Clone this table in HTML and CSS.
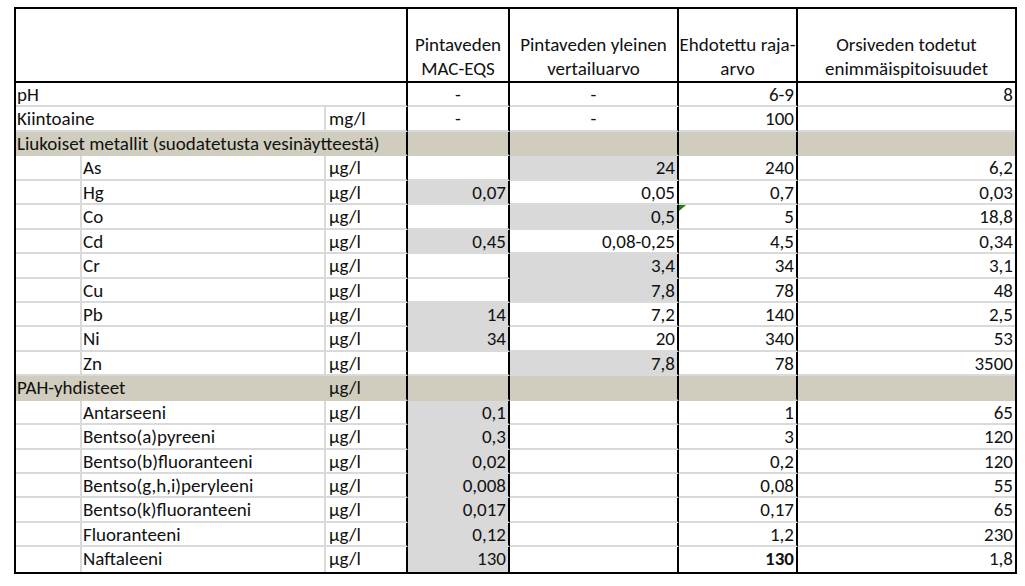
FILE: index.html
```html
<!DOCTYPE html>
<html lang="fi">
<head>
<meta charset="utf-8">
<title>Raja-arvot</title>
<link rel="stylesheet" href="styles.css">
</head>
<body>
<div class="sheet">
  <div class="c hd s3 bl"></div>
  <div class="c hd bl">Pintaveden<br>MAC-EQS</div>
  <div class="c hd bl">Pintaveden yleinen<br>vertailuarvo</div>
  <div class="c hd bl">Ehdotettu raja-<br>arvo</div>
  <div class="c hd">Orsiveden todetut<br>enimmäispitoisuudet</div>

  <div class="c s3 bl lead">pH</div>
  <div class="c ctr bl">-</div>
  <div class="c ctr bl">-</div>
  <div class="c r bl">6-9</div>
  <div class="c r">8</div>

  <div class="c s2 gl lead">Kiintoaine</div>
  <div class="c bl">mg/l</div>
  <div class="c ctr bl">-</div>
  <div class="c ctr bl">-</div>
  <div class="c r bl">100</div>
  <div class="c r"></div>

  <div class="c s3 bl t lead">Liukoiset metallit (suodatetusta vesinäytteestä)</div>
  <div class="c bl t"></div>
  <div class="c bl t"></div>
  <div class="c bl t"></div>
  <div class="c t"></div>

  <div class="c gl"></div><div class="c gl nm">As</div><div class="c bl">µg/l</div>
  <div class="c r bl"></div><div class="c r bl g">24</div><div class="c r bl">240</div><div class="c r">6,2</div>

  <div class="c gl"></div><div class="c gl nm">Hg</div><div class="c bl">µg/l</div>
  <div class="c r bl g">0,07</div><div class="c r bl">0,05</div><div class="c r bl">0,7</div><div class="c r">0,03</div>

  <div class="c gl"></div><div class="c gl nm">Co</div><div class="c bl">µg/l</div>
  <div class="c r bl"></div><div class="c r bl g">0,5</div><div class="c r bl"><span class="flag"></span>5</div><div class="c r">18,8</div>

  <div class="c gl"></div><div class="c gl nm">Cd</div><div class="c bl">µg/l</div>
  <div class="c r bl g">0,45</div><div class="c r bl">0,08-0,25</div><div class="c r bl">4,5</div><div class="c r">0,34</div>

  <div class="c gl"></div><div class="c gl nm">Cr</div><div class="c bl">µg/l</div>
  <div class="c r bl"></div><div class="c r bl g">3,4</div><div class="c r bl">34</div><div class="c r">3,1</div>

  <div class="c gl"></div><div class="c gl nm">Cu</div><div class="c bl">µg/l</div>
  <div class="c r bl"></div><div class="c r bl g">7,8</div><div class="c r bl">78</div><div class="c r">48</div>

  <div class="c gl"></div><div class="c gl nm">Pb</div><div class="c bl">µg/l</div>
  <div class="c r bl g">14</div><div class="c r bl">7,2</div><div class="c r bl">140</div><div class="c r">2,5</div>

  <div class="c gl"></div><div class="c gl nm">Ni</div><div class="c bl">µg/l</div>
  <div class="c r bl g">34</div><div class="c r bl">20</div><div class="c r bl">340</div><div class="c r">53</div>

  <div class="c gl"></div><div class="c gl nm">Zn</div><div class="c bl">µg/l</div>
  <div class="c r bl"></div><div class="c r bl g">7,8</div><div class="c r bl">78</div><div class="c r">3500</div>

  <div class="c s2 gl t lead">PAH-yhdisteet</div>
  <div class="c bl t">µg/l</div>
  <div class="c bl t"></div>
  <div class="c bl t"></div>
  <div class="c bl t"></div>
  <div class="c t"></div>

  <div class="c gl"></div><div class="c gl nm">Antarseeni</div><div class="c bl">µg/l</div>
  <div class="c r bl g">0,1</div><div class="c r bl"></div><div class="c r bl">1</div><div class="c r">65</div>

  <div class="c gl"></div><div class="c gl nm">Bentso(a)pyreeni</div><div class="c bl">µg/l</div>
  <div class="c r bl g">0,3</div><div class="c r bl"></div><div class="c r bl">3</div><div class="c r">120</div>

  <div class="c gl"></div><div class="c gl nm">Bentso(b)fluoranteeni</div><div class="c bl">µg/l</div>
  <div class="c r bl g">0,02</div><div class="c r bl"></div><div class="c r bl">0,2</div><div class="c r">120</div>

  <div class="c gl"></div><div class="c gl nm">Bentso(g,h,i)peryleeni</div><div class="c bl">µg/l</div>
  <div class="c r bl g">0,008</div><div class="c r bl"></div><div class="c r bl">0,08</div><div class="c r">55</div>

  <div class="c gl"></div><div class="c gl nm">Bentso(k)fluoranteeni</div><div class="c bl">µg/l</div>
  <div class="c r bl g">0,017</div><div class="c r bl"></div><div class="c r bl">0,17</div><div class="c r">65</div>

  <div class="c gl"></div><div class="c gl nm">Fluoranteeni</div><div class="c bl">µg/l</div>
  <div class="c r bl g">0,12</div><div class="c r bl"></div><div class="c r bl">1,2</div><div class="c r">230</div>

  <div class="c gl last"></div><div class="c gl nm last">Naftaleeni</div><div class="c bl last">µg/l</div>
  <div class="c r bl g last">130</div><div class="c r bl last"></div><div class="c r bl last"><b>130</b></div><div class="c r last">1,8</div>
</div>
</body>
</html>
```

FILE: styles.css
```css
html, body {
  margin: 0;
  padding: 0;
  background: #ffffff;
}

body {
  font-family: Carlito, Calibri, Lato, "Liberation Sans", sans-serif;
  font-size: 19px;
  color: #111111;
}

.sheet {
  display: grid;
  grid-template-columns: 66px 244px 82px 102px 169px 119px 217px;
  grid-template-rows: 74px repeat(20, 24.45px);
  width: max-content;
  margin: 7px 0 0 14px;
  border: 2px solid #000000;
  background: #ffffff;
}

.c {
  position: relative;
  box-sizing: border-box;
  border-bottom: 2px solid #dadada;
  padding: 1px 3px 0 3px;
  line-height: 22px;
  white-space: nowrap;
  overflow: visible;
}

.hd {
  display: flex;
  align-items: flex-end;
  justify-content: center;
  text-align: center;
  line-height: 24px;
  padding: 0;
  border-bottom: 2px solid #000000;
}

.s2 { grid-column: span 2; }
.s3 { grid-column: span 3; }

.gl { border-right: 2px solid #dadada; }
.bl { border-right: 2px solid #000000; }

.lead { padding-left: 1px; }
.nm { padding-left: 1px; }
.r { text-align: right; padding-right: 2px; }
.ctr { text-align: center; }

.g { background: #d9d9d9; }
.t { background: #d0cdbf; border-bottom-color: #d0cdbf; }
.t.gl { border-right-color: #d0cdbf; }

.last { border-bottom: none; }

.flag {
  position: absolute;
  top: 0;
  left: 0;
  width: 0;
  height: 0;
  border-top: 6px solid #1e7a1e;
  border-right: 7px solid transparent;
}
```
